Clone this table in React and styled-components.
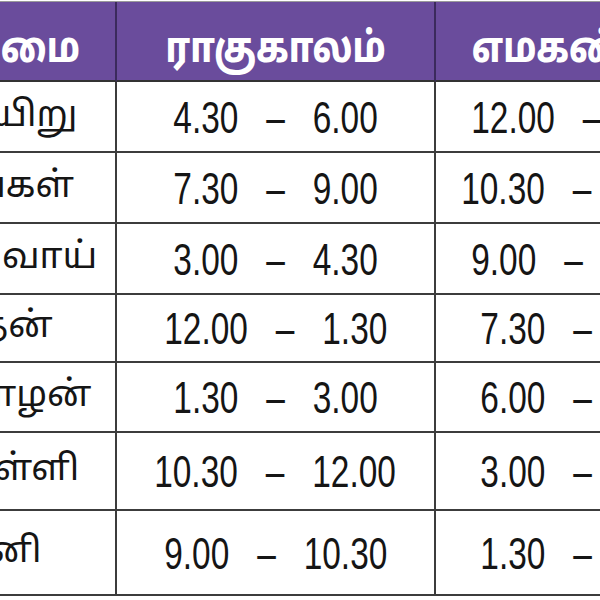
import React from "react";
import styled, { createGlobalStyle } from "styled-components";

const Global = createGlobalStyle`
  html, body { margin: 0; padding: 0; background: #ffffff; }
  #root { width: 600px; height: 600px; overflow: hidden; }
`;

const Frame = styled.div`
  width: 600px;
  height: 600px;
  overflow: hidden;
  background: #ffffff;
  padding-top: 1px;
  box-sizing: border-box;
`;

const Table = styled.div`
  display: grid;
  grid-template-columns: 229px 319px 295px;
  margin-left: -112px;
  width: 843px;
  border-top: 1px solid #9a9a9a;
`;

const HeadCell = styled.div`
  height: 80px;
  box-sizing: border-box;
  background: #6a4c9c;
  color: #ffffff;
  border-right: 2px solid #3b2a5c;
  border-bottom: 2px solid #333333;
  display: flex;
  align-items: center;
  justify-content: center;
  padding-top: 21px;
  white-space: nowrap;
`;

const HeadLabel = styled.span`
  display: inline-block;
  font-family: "Noto Sans Tamil", "Lohit Tamil", "Noto Sans", sans-serif;
  font-weight: 800;
  font-size: 42px;
  line-height: 1;
  transform: scaleX(0.83);
`;

const DayCell = styled.div`
  height: ${(p) => p.$h}px;
  box-sizing: border-box;
  border-right: 2px solid #3c3c3c;
  border-bottom: 2px solid #3c3c3c;
  display: flex;
  align-items: center;
  justify-content: center;
  font-family: "Noto Sans Tamil", "Lohit Tamil", "Noto Sans", sans-serif;
  font-size: 36px;
  color: #151515;
  white-space: nowrap;
`;

const TimeCell = styled.div`
  height: ${(p) => p.$h}px;
  box-sizing: border-box;
  border-right: 2px solid #3c3c3c;
  border-bottom: 2px solid #3c3c3c;
  display: flex;
  align-items: center;
  justify-content: center;
  overflow: hidden;
`;

const TimeText = styled.span`
  display: inline-block;
  font-family: "Liberation Sans", Arial, sans-serif;
  font-size: 44px;
  line-height: 1;
  color: #151515;
  white-space: pre;
  transform: scaleX(0.76);
  padding-top: 2px;
`;

const rows = [
  { day: "ஞாயிறு", rahu: "4.30   –   6.00", ema: "12.00   –   1.30", h: 71 },
  { day: "திங்கள்", rahu: "7.30   –   9.00", ema: "10.30   –   12.00", h: 71 },
  { day: "செவ்வாய்", rahu: "3.00   –   4.30", ema: "9.00   –   10.30", h: 71 },
  { day: "புதன்", rahu: "12.00   –   1.30", ema: "7.30   –   9.00", h: 68 },
  { day: "வியாழன்", rahu: "1.30   –   3.00", ema: "6.00   –   7.30", h: 70 },
  { day: "வெள்ளி", rahu: "10.30   –   12.00", ema: "3.00   –   4.30", h: 78 },
  { day: "சனி", rahu: "9.00   –   10.30", ema: "1.30   –   3.00", h: 85 },
];

export default function App() {
  return (
    <>
      <Global />
      <Frame>
        <Table>
          <HeadCell><HeadLabel>கிழமை</HeadLabel></HeadCell>
          <HeadCell><HeadLabel>ராகுகாலம்</HeadLabel></HeadCell>
          <HeadCell><HeadLabel>எமகண்டம்</HeadLabel></HeadCell>
          {rows.map((r) => (
            <React.Fragment key={r.day}>
              <DayCell $h={r.h}>{r.day}</DayCell>
              <TimeCell $h={r.h}>
                <TimeText>{r.rahu}</TimeText>
              </TimeCell>
              <TimeCell $h={r.h}>
                <TimeText>{r.ema}</TimeText>
              </TimeCell>
            </React.Fragment>
          ))}
        </Table>
      </Frame>
    </>
  );
}
